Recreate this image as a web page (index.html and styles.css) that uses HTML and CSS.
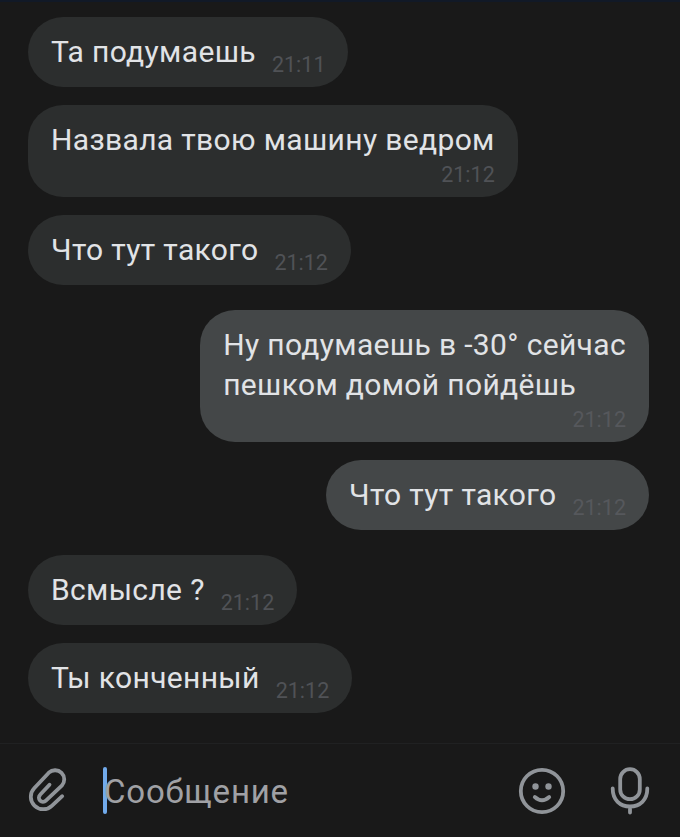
FILE: index.html
```html
<!DOCTYPE html>
<html lang="ru">
<head>
    <meta charset="UTF-8" />
    <meta name="viewport" content="width=device-width, initial-scale=1.0" />
    <title>Сообщения</title>
    <link rel="stylesheet" href="styles.css">
</head>
<body>
    <main class="chat">
        <div class="message">
            <p class="text">Та подумаешь</p>
            <time class="time">21:11</time>
        </div>
        <div class="message long">
            <p class="text">Назвала твою машину ведром</p>
            <time class="time">21:12</time>
        </div>
        <div class="message">
            <p class="text">Что тут такого</p>
            <time class="time">21:12</time>
        </div>
        <div class="message long mine turn">
            <p class="text">Ну подумаешь в -30° сейчас<br>пешком домой пойдёшь</p>
            <time class="time">21:12</time>
        </div>
        <div class="message mine">
            <p class="text">Что тут такого</p>
            <time class="time">21:12</time>
        </div>
        <div class="message turn">
            <p class="text">Всмысле ?</p>
            <time class="time">21:12</time>
        </div>
        <div class="message">
            <p class="text">Ты конченный</p>
            <time class="time">21:12</time>
        </div>
    </main>

    <footer class="composer">
        <svg class="icon clip" viewBox="0 0 40 46">
            <path d="M21.5 16.7 L12.1 26.8 A4.1 4.1 0 0 0 17.9 32.6 L33.8 17.7 A9.2 9.2 0 0 0 20.8 4.7 L6.2 20.2 A12.45 12.45 0 0 0 23.8 37.8 L34.2 28.2" />
        </svg>
        <div class="field">
            <span class="caret"></span>
            <span class="placeholder">Сообщение</span>
        </div>
        <svg class="icon smile" viewBox="0 0 48 48">
            <circle cx="24" cy="24" r="21.2" />
            <circle class="eye" cx="17.5" cy="19.5" r="3.2" />
            <circle class="eye" cx="30.5" cy="19.5" r="3.2" />
            <path d="M16.8 30 Q24 36.5 31.2 30" />
        </svg>
        <svg class="icon mic" viewBox="0 0 40 48">
            <rect x="10.2" y="2.2" width="19.6" height="30" rx="9.8" />
            <path d="M2.7 21.5 C2.7 33 10 39.5 20 39.5 S37.3 33 37.3 21.5 M20 39.5 V45.5" />
        </svg>
    </footer>
</body>
</html>
```
FILE: styles.css
```css
* {
    box-sizing: border-box;
}
body {
    margin: 0;
    height: 837px;
    display: flex;
    flex-direction: column;
    background: #191919;
    border-top: 2px solid #111927;
    font-family: Roboto, sans-serif;
    color: #e1e3e6;
    overflow: hidden;
}
.chat {
    flex: 1;
    display: flex;
    flex-direction: column;
    align-items: flex-start;
    gap: 18px;
    padding: 15px 31px 0 28px;
}
.message {
    display: flex;
    gap: 16px;
    height: 70px;
    padding: 15px 23px 7px;
    border-radius: 35px;
    background: #2c2e2e;
}
.message.long {
    flex-direction: column;
    gap: 0;
    height: auto;
}
.message.mine {
    align-self: flex-end;
    background: #444748;
}
.turn {
    margin-top: 7px;
}
.text {
    margin: 0;
    font-size: 30px;
    line-height: 40px;
    letter-spacing: 0.35px;
    white-space: nowrap;
}
.time {
    align-self: flex-end;
    font-size: 21.5px;
    line-height: 30px;
    color: #505256;
}
.mine .time {
    color: #56585c;
}
.composer {
    height: 94px;
    display: flex;
    align-items: center;
    padding: 0 30px 0 28px;
    border-top: 1px solid #202122;
}
.icon {
    flex: none;
    fill: none;
    stroke: #909499;
    stroke-width: 3.8;
    stroke-linecap: round;
    stroke-linejoin: round;
}
.clip {
    width: 40px;
    height: 46px;
}
.field {
    flex: 1;
    display: flex;
    align-items: center;
    margin-left: 34.5px;
}
.caret {
    width: 4px;
    height: 47px;
    border-radius: 2px;
    background: #71aaeb;
}
.placeholder {
    margin-left: -2.5px;
    padding-top: 3px;
    font-size: 33px;
    line-height: 40px;
    letter-spacing: 0.8px;
    color: #a0a1a5;
}
.smile {
    width: 48px;
    height: 48px;
    margin-right: 44px;
}
.eye {
    fill: #909499;
    stroke: none;
}
.mic {
    width: 40px;
    height: 48px;
}
```
